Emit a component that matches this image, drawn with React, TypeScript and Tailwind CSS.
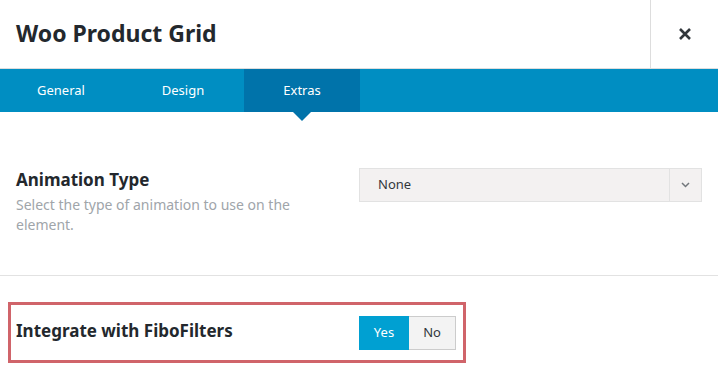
import React from "react";

export default function App() {
  return (
    <div className="w-[718px] h-[369px] bg-white overflow-hidden" style={{ fontFamily: '"Noto Sans", sans-serif' }}>
      {/* Header */}
      <div className="flex h-[69px] border-b border-[#dddddd]">
        <div className="flex-1 flex items-center pl-[16px]">
          <h1 className="text-[23px] font-bold text-[#23282d] leading-none pb-[1px]">Woo Product Grid</h1>
        </div>
        <button className="w-[68px] border-l border-[#dddddd] flex items-center justify-center">
          <svg width="14" height="14" viewBox="0 0 14 14">
            <path d="M2 2 L12 12 M12 2 L2 12" stroke="#32373c" strokeWidth="2.6" strokeLinecap="butt" />
          </svg>
        </button>
      </div>
      {/* Tabs */}
      <div className="flex h-[43px] bg-[#008ec2] text-white text-[13px]">
        <div className="w-[122px] flex items-center justify-center">General</div>
        <div className="w-[122px] flex items-center justify-center">Design</div>
        <div className="relative w-[116px] flex items-center justify-center bg-[#0073aa]">
          Extras
          <span className="absolute left-1/2 -translate-x-1/2 top-full w-0 h-0 border-l-[9px] border-r-[9px] border-t-[9px] border-l-transparent border-r-transparent border-t-[#0073aa]" />
        </div>
      </div>
      {/* Animation Type */}
      <div className="flex justify-between pl-[16px] pr-[16px] pt-[56px] h-[164px] border-b border-[#e2e2e2]">
        <div className="w-[300px]">
          <div className="text-[17px] font-bold text-[#23282d] leading-[20px] pt-[2px]">Animation Type</div>
          <div className="text-[14px] text-[#a0a5aa] leading-[20px] mt-[5px]">
            Select the type of animation to use on the element.
          </div>
        </div>
        <div className="w-[343px] h-[34px] flex bg-[#f3f1f1] border border-[#e2e2e2]">
          <div className="flex-1 flex items-center pl-[18px] text-[13px] text-[#32373c]">None</div>
          <div className="w-[32px] border-l border-[#e2e2e2] flex items-center justify-center">
            <svg width="9" height="6" viewBox="0 0 9 6">
              <path d="M1 1 L4.5 4.5 L8 1" fill="none" stroke="#72777c" strokeWidth="1.5" />
            </svg>
          </div>
        </div>
      </div>
      {/* FiboFilters */}
      <div className="pt-[26px] pl-[8px]">
        <div className="w-[458px] h-[61px] border-[3px] border-[#d0646a] flex items-center justify-between pl-[5px] pr-[7px]">
          <div className="text-[17px] font-bold text-[#23282d] leading-[20px] -mt-[3px]">Integrate with FiboFilters</div>
          <div className="flex h-[34px] text-[13px]">
            <div className="w-[50px] flex items-center justify-center bg-[#00a0d2] text-white">Yes</div>
            <div className="w-[47px] flex items-center justify-center bg-[#f3f3f3] border border-[#cccccc] border-l-0 text-[#32373c]">No</div>
          </div>
        </div>
      </div>
    </div>
  );
}
